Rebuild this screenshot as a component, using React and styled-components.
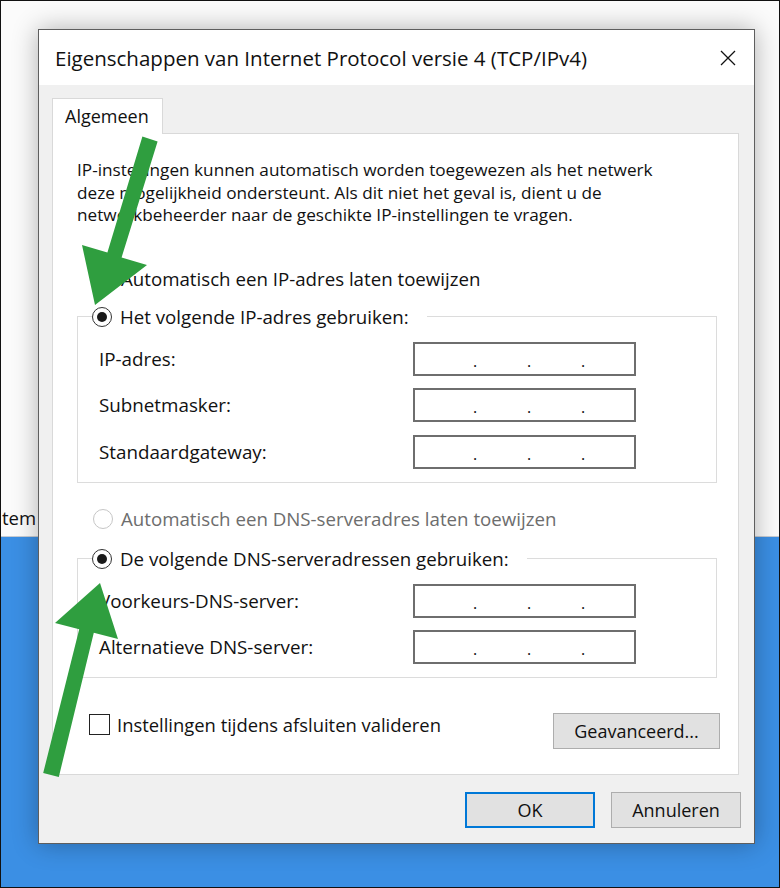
import React from 'react';
import styled, { createGlobalStyle } from 'styled-components';

const GlobalStyle = createGlobalStyle`
  html, body {
    margin: 0;
    padding: 0;
    background: #fbfbfb;
  }
  body {
    font-family: 'Open Sans', 'Noto Sans', sans-serif;
    color: #111;
  }
`;

const IpField = ({ label }) => (
  <FieldRow>
    <FieldLabel>{label}</FieldLabel>
    <IpBox>
      <IpPart />
      <IpDot>.</IpDot>
      <IpPart />
      <IpDot>.</IpDot>
      <IpPart />
      <IpDot>.</IpDot>
      <IpPart $last />
    </IpBox>
  </FieldRow>
);

const RadioOption = ({ checked, disabled, children }) => (
  <RadioRow $disabled={disabled}>
    <Radio $checked={checked} $disabled={disabled} />
    <span>{children}</span>
  </RadioRow>
);

const App = () => {
  return (
    <>
      <GlobalStyle />
      <Desktop>
        {/* window behind the dialog */}
        <BackWindow>
          <BackText>tem</BackText>
        </BackWindow>
        <DesktopBlue />

        <Dialog>
          <TitleBar>
            <Title>Eigenschappen van Internet Protocol versie 4 (TCP/IPv4)</Title>
            <CloseIcon viewBox="0 0 16 16">
              <path d="M1 1 L15 15 M15 1 L1 15" stroke="#111" strokeWidth="1.3" fill="none" />
            </CloseIcon>
          </TitleBar>

          <DialogBody>
            <Tab>Algemeen</Tab>
            <Panel>
              <Description>
                IP-instellingen kunnen automatisch worden toegewezen als het netwerk
                <br />
                deze mogelijkheid ondersteunt. Als dit niet het geval is, dient u de
                <br />
                netwerkbeheerder naar de geschikte IP-instellingen te vragen.
              </Description>

              <AutoOption>
                <RadioOption>Automatisch een IP-adres laten toewijzen</RadioOption>
              </AutoOption>

              <GroupBox $top={16}>
                <Legend>
                  <RadioOption checked>Het volgende IP-adres gebruiken:</RadioOption>
                </Legend>
                <Fields>
                  <IpField label="IP-adres:" />
                  <IpField label="Subnetmasker:" />
                  <IpField label="Standaardgateway:" />
                </Fields>
              </GroupBox>

              <AutoOption $top={25}>
                <RadioOption disabled>Automatisch een DNS-serveradres laten toewijzen</RadioOption>
              </AutoOption>

              <GroupBox $top={18}>
                <Legend>
                  <RadioOption checked>De volgende DNS-serveradressen gebruiken:</RadioOption>
                </Legend>
                <Fields>
                  <IpField label="Voorkeurs-DNS-server:" />
                  <IpField label="Alternatieve DNS-server:" />
                </Fields>
              </GroupBox>

              <BottomRow>
                <CheckLabel>
                  <CheckBox />
                  <span>Instellingen tijdens afsluiten valideren</span>
                </CheckLabel>
                <Button $width={167}>Geavanceerd...</Button>
              </BottomRow>
            </Panel>

            <Footer>
              <Button $width={130} $default>OK</Button>
              <Button $width={130}>Annuleren</Button>
            </Footer>
          </DialogBody>
        </Dialog>

        {/* green annotation arrows */}
        <Arrows viewBox="0 0 780 888">
          <polygon
            fill="#2f9e3f"
            points="142.4,136.4 157.6,141.6 121.6,257.4 147,265 95,305 82,245 107.4,252.6"
          />
          <polygon
            fill="#2f9e3f"
            points="43.2,773 79.2,629.2 55,623 100,583 118,639 93.8,632.8 58.8,777"
          />
        </Arrows>
      </Desktop>
    </>
  );
};

export default App;

// Styled Components
const Desktop = styled.div`
  position: relative;
  width: 780px;
  height: 888px;
  box-sizing: border-box;
  border: 1px solid #111;
  overflow: hidden;
  display: flex;
  flex-direction: column;
`;

const BackWindow = styled.div`
  height: 536px;
  box-sizing: border-box;
  background: #fbfbfb;
  border-bottom: 1px solid #c7ccd3;
  display: flex;
  align-items: flex-end;
  padding: 0 0 6px 1px;
`;

const BackText = styled.span`
  font-size: 18.5px;
  color: #111;
`;

const DesktopBlue = styled.div`
  flex: 1;
  background: #3b8fe4;
`;

const Dialog = styled.div`
  position: absolute;
  left: 37px;
  top: 28px;
  width: 717px;
  height: 815px;
  box-sizing: border-box;
  border: 1px solid #5e5e5e;
  background: #f0f0f0;
  box-shadow: 0 0 24px rgba(0, 0, 0, 0.3);
  display: flex;
  flex-direction: column;
`;

const TitleBar = styled.div`
  height: 55px;
  flex-shrink: 0;
  background: #fff;
  display: flex;
  align-items: center;
  justify-content: space-between;
  padding: 0 18px 0 16px;
`;

const Title = styled.div`
  font-size: 20.5px;
  color: #111;
`;

const CloseIcon = styled.svg`
  width: 16px;
  height: 16px;
`;

const DialogBody = styled.div`
  flex: 1;
  display: flex;
  flex-direction: column;
  padding: 13px 13px 0 13px;
`;

const Tab = styled.div`
  align-self: flex-start;
  width: 111px;
  height: 36px;
  box-sizing: border-box;
  margin-bottom: -1px;
  position: relative;
  z-index: 1;
  background: #fff;
  border: 1px solid #d9d9d9;
  border-bottom: none;
  padding-left: 12px;
  font-size: 18px;
  line-height: 34px;
`;

const Panel = styled.div`
  width: 687px;
  height: 642px;
  box-sizing: border-box;
  background: #fff;
  border: 1px solid #d9d9d9;
  display: flex;
  flex-direction: column;
  padding-top: 25px;
`;

const Description = styled.p`
  margin: 0 10px 0 24px;
  font-size: 17.2px;
  line-height: 22.5px;
  white-space: nowrap;
`;

const AutoOption = styled.div`
  margin: ${(p) => p.$top ?? 41}px 0 0 40px;
`;

const RadioRow = styled.label`
  display: flex;
  align-items: center;
  gap: 8px;
  height: 22px;
  font-size: 18.7px;
  color: ${(p) => (p.$disabled ? '#6d6d6d' : '#111')};
  white-space: nowrap;
`;

const Radio = styled.span`
  width: 20px;
  height: 20px;
  box-sizing: border-box;
  border-radius: 50%;
  border: 1.5px solid ${(p) => (p.$disabled ? '#c6c6c6' : '#333')};
  display: flex;
  align-items: center;
  justify-content: center;
  flex-shrink: 0;

  &::after {
    content: '';
    width: 10px;
    height: 10px;
    border-radius: 50%;
    background: #1a1a1a;
    display: ${(p) => (p.$checked ? 'block' : 'none')};
  }
`;

const GroupBox = styled.fieldset`
  margin: ${(p) => p.$top}px 0 0 24px;
  width: 640px;
  box-sizing: border-box;
  border: 1px solid #dcdcdc;
  padding: 0 80px 13px 0;
  min-width: 0;
`;

const Legend = styled.legend`
  margin-left: 14px;
  padding: 0 18px 0 0;
`;

const Fields = styled.div`
  display: flex;
  flex-direction: column;
  gap: 12.5px;
  margin: 14px 0 0 21px;
`;

const FieldRow = styled.div`
  display: flex;
  align-items: center;
  justify-content: space-between;
  height: 34px;
`;

const FieldLabel = styled.span`
  font-size: 18.8px;
  color: #111;
`;

const IpBox = styled.div`
  width: 223px;
  height: 34px;
  box-sizing: border-box;
  border: 2px solid #6e6e6e;
  background: #fff;
  display: flex;
  align-items: center;
  padding-left: 7px;
`;

const IpPart = styled.span`
  width: ${(p) => (p.$last ? 'auto' : '51px')};
  flex: ${(p) => (p.$last ? 1 : 'none')};
`;

const IpDot = styled.span`
  width: 3px;
  text-align: center;
  font-size: 16px;
  line-height: 1;
  position: relative;
  top: 2px;
`;

const BottomRow = styled.div`
  margin: 35px 18px 0 36px;
  display: flex;
  align-items: flex-start;
  justify-content: space-between;
`;

const CheckLabel = styled.label`
  display: flex;
  align-items: center;
  gap: 7px;
  height: 22px;
  font-size: 18.4px;
  color: #111;
`;

const CheckBox = styled.span`
  width: 21px;
  height: 21px;
  box-sizing: border-box;
  border: 1.5px solid #222;
  background: #fff;
`;

const Button = styled.button`
  width: ${(p) => p.$width}px;
  height: 36px;
  box-sizing: border-box;
  background: #e1e1e1;
  border: ${(p) => (p.$default ? '2px solid #0078d7' : '1px solid #adadad')};
  font-family: inherit;
  font-size: 18px;
  color: #111;
  padding: 0;
`;

const Footer = styled.div`
  display: flex;
  justify-content: flex-end;
  gap: 16px;
  margin-top: 17px;
`;

const Arrows = styled.svg`
  position: absolute;
  left: -1px;
  top: -1px;
  width: 780px;
  height: 888px;
  pointer-events: none;
`;
